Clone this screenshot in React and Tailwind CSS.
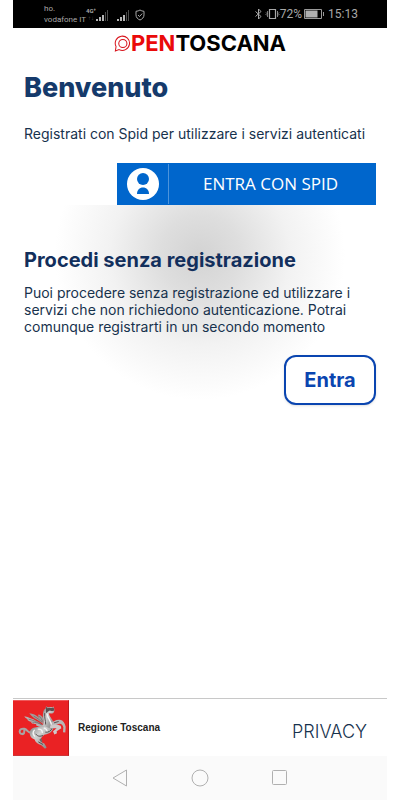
import React from "react";

const SignalBars = ({ className }) => (
  <svg viewBox="0 0 13 11" className={className} aria-hidden="true">
    <path d="M0 9h2v2H0zM3 7h2v4H3zM6 5h2v6H6z" fill="#b5b5b5" />
    <path d="M9 2h1v9H9zM11 0h1v11h-1z" fill="#4b4b4b" />
  </svg>
);

const StatusBar = () => (
  <div className="flex h-7 items-center justify-between bg-black pl-[31px] pr-[29px] text-[#a8a8a8] font-[Roboto,sans-serif]">
    <div className="flex items-center">
      <div className="text-[8px] leading-[11px]">
        <div>ho.</div>
        <div>vodafone IT</div>
      </div>
      <div className="flex items-end">
        <div className="flex flex-col items-center text-[6px] leading-[7px] font-bold">
          <span>4G⁺</span>
          <span className="text-[#555]">↑↓</span>
        </div>
        <SignalBars className="h-[11px] w-[13px]" />
        <SignalBars className="ml-2 h-[11px] w-[13px]" />
        <svg viewBox="0 0 12 12" className="ml-1 h-3 w-3" fill="none" stroke="#a8a8a8" aria-hidden="true">
          <path d="M6 1c1.200.8 2.500 1.200 4 1.300v3.600c0 2.400-1.600 4.200-4 5.100-2.400-.9-4-2.700-4-5.100V2.300C3.500 2.200 4.800 1.800 6 1z" />
          <path d="M4 6l1.500 1.500L8.200 4.600" />
        </svg>
      </div>
    </div>
    <div className="flex items-center">
      <svg viewBox="0 0 9 12" className="mr-[2px] h-3 w-[9px]" fill="none" stroke="#a8a8a8" aria-hidden="true">
        <path d="M1.500 3.500l5.500 5L4.500 11V1L7 3.500l-5.500 5" />
      </svg>
      <svg viewBox="0 0 15 12" className="h-3 w-[15px]" fill="none" stroke="#a8a8a8" aria-hidden="true">
        <path d="M4.500 1.500h6v9h-6z" strokeWidth="1.200" />
        <path d="M1 4.500l1 1-1 1 1 1M2.600 3v6M14 4.500l-1 1 1 1-1 1M12.500 3v6" strokeWidth=".8" />
      </svg>
      <span className="text-xs leading-4">72%</span>
      <svg viewBox="0 0 20 10" className="ml-[2px] h-[10px] w-5" aria-hidden="true">
        <path d="M.5.5h17v9H.5z" fill="none" stroke="#9a9a9a" />
        <path d="M1.500 1.500h12v7h-12z" fill="#b0b0b0" />
        <path d="M19 3h1v4h-1z" fill="#9a9a9a" />
      </svg>
      <span className="ml-1 text-xs leading-4">15:13</span>
    </div>
  </div>
);

const Logo = () => (
  <div className="flex h-[30px] items-center justify-center font-[Inter,sans-serif] text-[22px] leading-none font-bold text-black">
    <svg viewBox="0 0 50 50" className="h-[17px] w-[17px]" fill="none" stroke="#d8141c" role="img" aria-label="O">
      <path d="M4 47L6 34A21 21 0 1 1 15 43z" strokeWidth="3" />
      <circle cx="26" cy="25" r="12" strokeWidth="3" />
    </svg>
    <span className="text-[#ea0a0a]">PEN</span>
    <span>TOSCANA</span>
  </div>
);

const SpidIcon = () => (
  <svg viewBox="0 0 32 32" className="h-8 w-8" aria-hidden="true">
    <circle cx="16" cy="16" r="16" fill="#fff" />
    <circle cx="16" cy="11" r="6" fill="#06c" />
    <path d="M10 26c0-4 2.500-6.500 6-6.500s6 2.500 6 6.500z" fill="#06c" />
  </svg>
);

const Pegasus = () => (
  <svg viewBox="15 9 168 167" className="h-14 w-14 shrink-0" role="img" aria-label="Pegaso">
    <defs>
      <linearGradient id="silver" x1="0" y1="0" x2="1" y2="1">
        <stop offset="0" stopColor="#777" />
        <stop offset=".4" stopColor="#d2d2d2" />
        <stop offset=".65" stopColor="#a5a5a5" />
        <stop offset="1" stopColor="#777" />
      </linearGradient>
    </defs>
    <path d="M15 9h168v167H15z" fill="#ea2224" />
    <path d="M15 174h168v2H15zM181 9h2v167h-2z" fill="#a91518" />
    {/* tail */}
    <path d="M72 104C62 112 60 98 49 95c-7-2-14 2-14 8s5 9 11 6M49 97c-1 8 2 12-4 14" fill="none" stroke="#a9a4a4" strokeWidth="6" strokeLinecap="round" />
    {/* far hind leg */}
    <path d="M88 122c0 8 3 12 8 15l7-3-2-10z" fill="#6f6767" />
    {/* hindquarters, body and hind leg */}
    <path d="M65 108c0-11 8-17 20-18 9-1 17-3 22-10l29 4c2 16-8 25-27 29-7 5-10 11-15 15 2 6 8 8 15 11l7 12-5 4-11-11c-10-3-18-8-20-17-9-3-15-10-15-19z" fill="url(#silver)" />
    {/* neck and head */}
    <path d="M105 86c4-14-2-24 0-38 1-7 3-11 8-14l1-7 6 4c5-2 9-2 13 0l4-3 2 9c1 7-2 12-8 12l-9-1c2 10 12 18 15 29 2 8-1 16-8 18z" fill="url(#silver)" />
    <path d="M114 29l5 4c6-2 12-1 18-2l2 8c-5 4-9 3-13 1-5 2-9 6-12 8z" fill="#5b5050" />
    {/* front legs */}
    <path d="M126 77c11-3 18-11 30-9 10 2 15 10 17 21l-1 17-7-1 1-15c-2-6-5-10-11-10-8 1-16 8-26 10z" fill="#b9b4b4" />
    <path d="M128 84c10-3 20-2 30 2l2 7-14 9 1 6-8 4-4-10 11-9c-8 0-14 1-21-1z" fill="#cfcaca" />
    {/* wing */}
    <path d="M109 88C96 76 75 63 49 57c2 5 8 8 12 9l-4 1c4 5 10 7 15 7l-3 3c5 4 12 4 16 3l-1 4c9 5 16 6 25 4z" fill="#b7b3b3" />
    <path d="M109 84C100 66 86 50 64 48c3 6 9 9 15 15 10 4 20 12 30 21zM108 78c1-14-6-24-17-26-2 8 7 16 17 26z" fill="#a29c9c" />
    {/* shading */}
    <path d="M62 66c14 3 27 9 39 16M73 75c10 0 19 3 28 8M77 57c10 5 19 12 25 18M94 57c4 5 8 10 10 16" fill="none" stroke="#6c6060" strokeWidth="2" />
    <path d="M110 48c-1 14 3 22 3 34M83 110c6 9 14 8 22 5M112 105c10 1 17-4 20-11M138 77l14-4M91 134l14 8" fill="none" stroke="#595151" strokeWidth="3" />
    <path d="M117 50c2 12 10 20 13 31M79 99c-6 7-5 12 1 18M91 96c8-1 12 4 12 10M109 93c5 2 8 4 8 8" fill="none" stroke="#f5f5f5" strokeWidth="4" strokeLinecap="round" />
  </svg>
);

const NavBar = () => (
  <nav className="flex h-11 items-center justify-center gap-[62px] bg-[#fafafa] text-[#b0b0b0]">
    <button type="button" aria-label="Indietro">
      <svg viewBox="0 0 18 18" className="h-[18px] w-[18px]" fill="none" stroke="currentColor">
        <path d="M15.500 1v16L2 9z" strokeLinejoin="round" />
      </svg>
    </button>
    <button type="button" aria-label="Home">
      <svg viewBox="0 0 18 18" className="h-[18px] w-[18px]" fill="none" stroke="currentColor">
        <circle cx="9" cy="9" r="8" />
      </svg>
    </button>
    <button type="button" aria-label="Recenti">
      <svg viewBox="0 0 18 18" className="h-[18px] w-[18px]" fill="none" stroke="currentColor">
        <rect x="1.500" y="1.500" width="14" height="14" rx="1" />
      </svg>
    </button>
  </nav>
);

const App = () => {
  return (
    <div className="min-h-screen bg-white px-[13px] font-[Inter,sans-serif] text-[#17324d]">
      <div className="flex min-h-screen flex-col">
        <StatusBar />
        <Logo />

        <main className="flex-1">
          <section className="px-[11px] pt-3">
            <h1 className="text-[27px] leading-9 font-extrabold text-[#153a6b]">Benvenuto</h1>
            <p className="mt-5 text-sm leading-4 whitespace-nowrap">
              Registrati con Spid per utilizzare i servizi autenticati
            </p>
            <div className="mt-[21px] flex justify-end">
              <button type="button" className="flex h-[42px] w-[259px] items-center bg-[#0066cc] text-white">
                <span className="flex h-10 w-[52px] items-center justify-center border-r border-[#4d94db]">
                  <SpidIcon />
                </span>
                <span className="flex-1 pr-1 text-center font-['Open_Sans',sans-serif] text-[17px] leading-6">
                  ENTRA CON SPID
                </span>
              </button>
            </div>
          </section>

          <section className="bg-[radial-gradient(circle_at_50%_50px,#d3d3d3_0,#dedede_40px,#f2f2f2_90px,#ffffff_145px)] px-[11px] pt-[43px]">
            <h2 className="text-xl leading-6 font-bold text-[#122f5c]">Procedi senza registrazione</h2>
            <p className="mt-3 text-sm leading-[17px]">
              Puoi procedere senza registrazione ed utilizzare i<br />
              servizi che non richiedono autenticazione. Potrai<br />
              comunque registrarti in un secondo momento
            </p>
            <div className="mt-5 flex justify-end pb-2">
              <button
                type="button"
                className="h-[50px] w-[92px] rounded-xl border-2 border-[#0a45b0] bg-white text-xl font-bold text-[#0a45b0] shadow-sm"
              >
                Entra
              </button>
            </div>
          </section>
        </main>

        <footer className="flex h-[58px] items-center justify-between border-t border-[#c8c8c8] pr-5">
          <div className="flex items-center gap-[9px]">
            <Pegasus />
            <span className="font-['Liberation_Sans',sans-serif] text-[10px] leading-4 font-bold text-[#222]">Regione Toscana</span>
          </div>
          <a href="#privacy" className="pt-2 text-lg leading-5 font-light">PRIVACY</a>
        </footer>
        <NavBar />
      </div>
    </div>
  );
};

export default App;
